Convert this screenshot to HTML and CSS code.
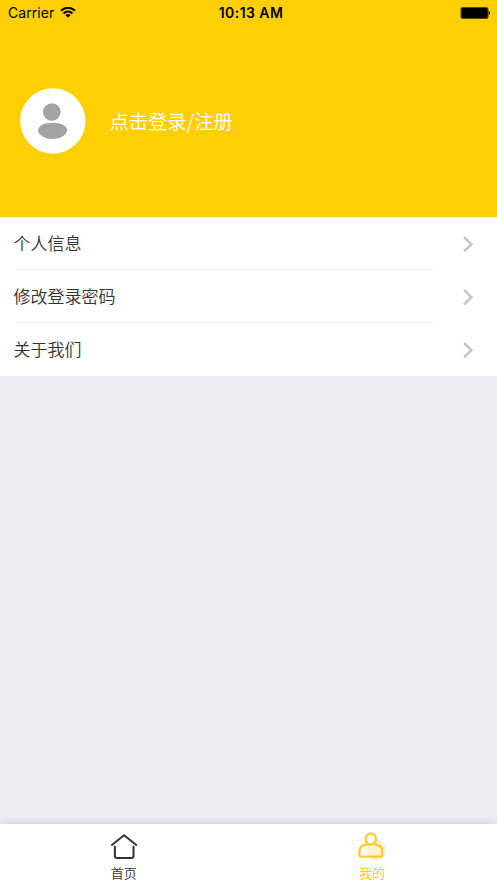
FILE: index.html
```html
<!DOCTYPE html>
<html lang="zh-CN">
<head>
<meta charset="utf-8">
<title>我的</title>
<link rel="stylesheet" href="styles.css">
</head>
<body>
<header class="profile">
  <div class="status">
    <div class="carrier"><span class="carrier-name">Carrier</span>
      <svg class="wifi" width="16" height="12" viewBox="0 0 16 12" fill="none" stroke="#000" stroke-width="2"><path d="M1 3.7Q8-2.3 15 3.7M3.5 6.4Q8 2.5 12.5 6.4"/><path d="M5.4 8Q8 6 10.6 8L8 10.7Z" fill="#000" stroke="none"/></svg>
    </div>
    <time class="clock">10:13 AM</time>
    <svg class="battery" width="30" height="12" viewBox="0 0 30 12"><rect x="1" y=".5" width="27" height="11" rx="1.5" fill="#000" stroke="#59490a"/><path d="M28.7 4Q30 4.5 30 6T28.7 8Z"/></svg>
  </div>
  <div class="login">
    <svg class="avatar" width="66" height="66" viewBox="0 0 66 66"><circle cx="32.8" cy="33" r="32.7" fill="#fff"/><g fill="#a6a2a2"><circle cx="31.8" cy="24" r="8.8"/><path d="M18 42.5C18 37.5 25 34.8 32.6 34.8S47.2 37.5 47.2 42.5C46 48 39.5 51 32.6 51S19.2 48 18 42.5Z"/></g></svg>
    <span class="login-text">点击登录/注册</span>
  </div>
</header>
<main class="menu">
  <div class="row"><span>个人信息</span><svg class="chevron" viewBox="0 0 12 16"><path d="M1 1L8.4 8.2L1 15.4"/></svg></div>
  <div class="row"><span>修改登录密码</span><svg class="chevron" viewBox="0 0 12 16"><path d="M1 1L8.4 8.2L1 15.4"/></svg></div>
  <div class="row"><span>关于我们</span><svg class="chevron" viewBox="0 0 12 16"><path d="M1 1L8.4 8.2L1 15.4"/></svg></div>
</main>
<nav class="tabs">
  <div class="tab">
    <svg width="30" height="30" viewBox="0 0 30 30" fill="none" stroke="#333" stroke-width="2" stroke-linecap="round" stroke-linejoin="round"><path d="M2.9 13L15.1 3.3L27.3 13M5.9 14.5V24Q5.9 26 7.9 26H22.5Q24.5 26 24.5 24V14.5"/></svg>
    <span>首页</span>
  </div>
  <div class="tab active">
    <svg width="30" height="30" viewBox="0 0 30 30"><circle cx="19" cy="18.2" r="10.2" fill="#fff4cf"/><g fill="none" stroke="#fecb2f" stroke-width="2.3" stroke-linejoin="round"><ellipse cx="13.8" cy="7" rx="5.2" ry="5.7"/><path d="M10.2 12.4C5.4 13 2.3 15.5 2.3 19.5V22.8Q2.3 24.6 4.1 24.6H23.5Q25.3 24.6 25.3 22.8V19.5C25.3 15.5 22.2 13 17.4 12.4"/></g></svg>
    <span>我的</span>
  </div>
</nav>
</body>
</html>
```
FILE: styles.css
```css
* { box-sizing: border-box; }
body {
  margin: 0;
  height: 883px;
  display: flex;
  flex-direction: column;
  overflow: hidden;
  background: #efeef4;
  color: #333;
  font-family: Inter, "Noto Sans CJK SC", sans-serif;
}
svg { display: block; flex: none; }
.profile { height: 217px; flex: none; background: #ffcf02; }
.status {
  height: 26px;
  display: grid;
  grid-template-columns: 1fr auto 1fr;
  align-items: center;
  padding: 0 7px 0 8px;
  color: #000;
  font-size: 14px;
  line-height: 26px;
}
.carrier { display: flex; align-items: center; gap: 6px; }
.carrier-name { letter-spacing: .05px; }
.clock { font-weight: 600; letter-spacing: .45px; padding-left: 4px; }
.battery { justify-self: end; }
.login { display: flex; align-items: center; gap: 23.5px; padding: 62px 20px 0; }
.login-text {
  color: #fff;
  font: 350 19.3px/30px "Noto Sans CJK SC", sans-serif;
}
.menu { flex: none; background: #fff; font-size: 17px; }
.row {
  height: 53px;
  display: flex;
  align-items: center;
  justify-content: space-between;
  padding: 0 22px 0 13.5px;
  font-family: "Noto Sans CJK SC", sans-serif;
  font-weight: 350;
  background: linear-gradient(#f0f0f0, #f0f0f0) 18px 100% / 416px 1px no-repeat;
}
.row span { padding-bottom: 2px; }
.row:last-child { background: none; }
.chevron {
  width: 12px;
  height: 16px;
  overflow: visible;
  fill: none;
  stroke: #c7c7cc;
  stroke-width: 2.6;
}
.tabs {
  height: 59px;
  margin-top: auto;
  flex: none;
  display: grid;
  grid-template-columns: 1fr 1fr;
  background: #fff;
  box-shadow: 0 -1px 9px rgba(0, 0, 0, .16);
}
.tab {
  display: flex;
  flex-direction: column;
  align-items: center;
  padding: 8px 1px 0 0;
  font: 350 13px/20px "Noto Sans CJK SC", sans-serif;
}
.tab span { margin-top: 1px; }
.active { color: #fec91f; }
.active span { font-weight: 400; }
```
